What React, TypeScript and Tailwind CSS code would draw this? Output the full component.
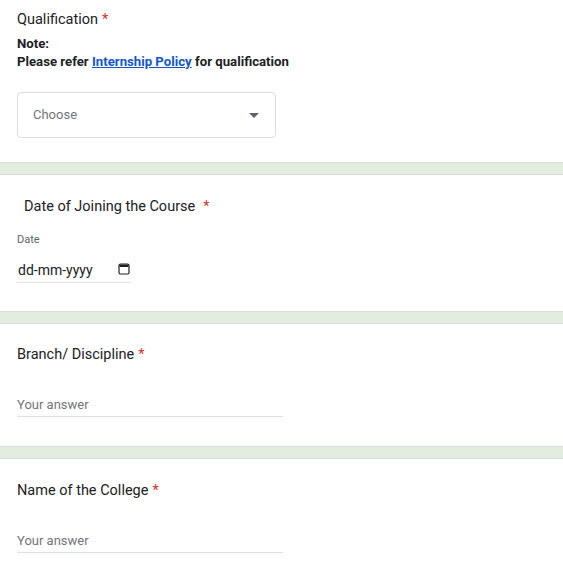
import React from "react";

/* ───────── small pieces ───────── */
function Title({ text, className = "" }: { text: string; className?: string }) {
  return (
    <div className={`text-[14.5px] leading-6 text-[#202124] ${className}`}>
      {text}
      <span className="ml-[4px] text-[#d93025]">*</span>
    </div>
  );
}

function AnswerLine() {
  return (
    <div className="w-[266px] border-b border-[#e0e0e0] pb-[1px] text-[13px] leading-5 text-[#70757a]">
      Your answer
    </div>
  );
}

function Card({ children, className = "" }: { children: React.ReactNode; className?: string }) {
  return <div className={`border-y border-[#dadce0] bg-white px-[17px] ${className}`}>{children}</div>;
}

export default function App() {
  return (
    <div
      className="min-h-[574px] bg-[#e2ede0]"
      style={{ fontFamily: "Roboto, 'Liberation Sans', Arial, sans-serif" }}
    >
      {/* Qualification */}
      <div className="border-b border-[#dadce0] bg-white px-[17px] pb-[24px] pt-[8px]">
        <Title text="Qualification" />
        <div className="mt-[3px] text-[13.2px] font-bold leading-[18px] text-[#202124]">
          <div>Note:</div>
          <div>
            Please refer{" "}
            <a href="#" className="text-[#1155cc] underline">
              Internship Policy
            </a>{" "}
            for qualification
          </div>
        </div>
        <div className="mt-[21px] flex h-[46px] w-[259px] items-center justify-between rounded-[4px] border border-[#dadce0] pl-[15px] pr-[16px]">
          <span className="text-[13px] text-[#70757a]">Choose</span>
          <svg width="10" height="5" viewBox="0 0 10 5">
            <path d="M0 0h10L5 5z" fill="#5f6368" />
          </svg>
        </div>
      </div>

      {/* Date of joining */}
      <Card className="mt-[11px] pb-[28px] pt-[20px]">
        <div className="pl-[7px] text-[14.5px] leading-6 text-[#202124]">
          Date of Joining the Course<span className="ml-[8px] text-[#d93025]">*</span>
        </div>
        <div className="mt-[13px] text-[11px] leading-4 text-[#5f6368]">Date</div>
        <div className="mt-[12px] flex w-[114px] items-center justify-between border-b border-[#e0e0e0] pb-[2px] pl-[1px] pr-[1px]">
          <span className="text-[14px] leading-5 text-[#202124]">dd-mm-yyyy</span>
          <svg width="12" height="12" viewBox="0 0 12 12" className="mb-[3px]">
            <rect x="1" y="1" width="10" height="10" rx="1.5" fill="none" stroke="#202124" strokeWidth="1.2" />
            <rect x="1.5" y="1.5" width="9" height="2.5" fill="#202124" />
          </svg>
        </div>
      </Card>

      {/* Branch */}
      <Card className="mt-[11px] pb-[29px] pt-[19px]">
        <Title text="Branch/ Discipline" />
        <div className="mt-[28px]">
          <AnswerLine />
        </div>
      </Card>

      {/* College */}
      <Card className="mt-[11px] pb-[29px] pt-[20px]">
        <Title text="Name of the College" />
        <div className="mt-[28px]">
          <AnswerLine />
        </div>
      </Card>
    </div>
  );
}
